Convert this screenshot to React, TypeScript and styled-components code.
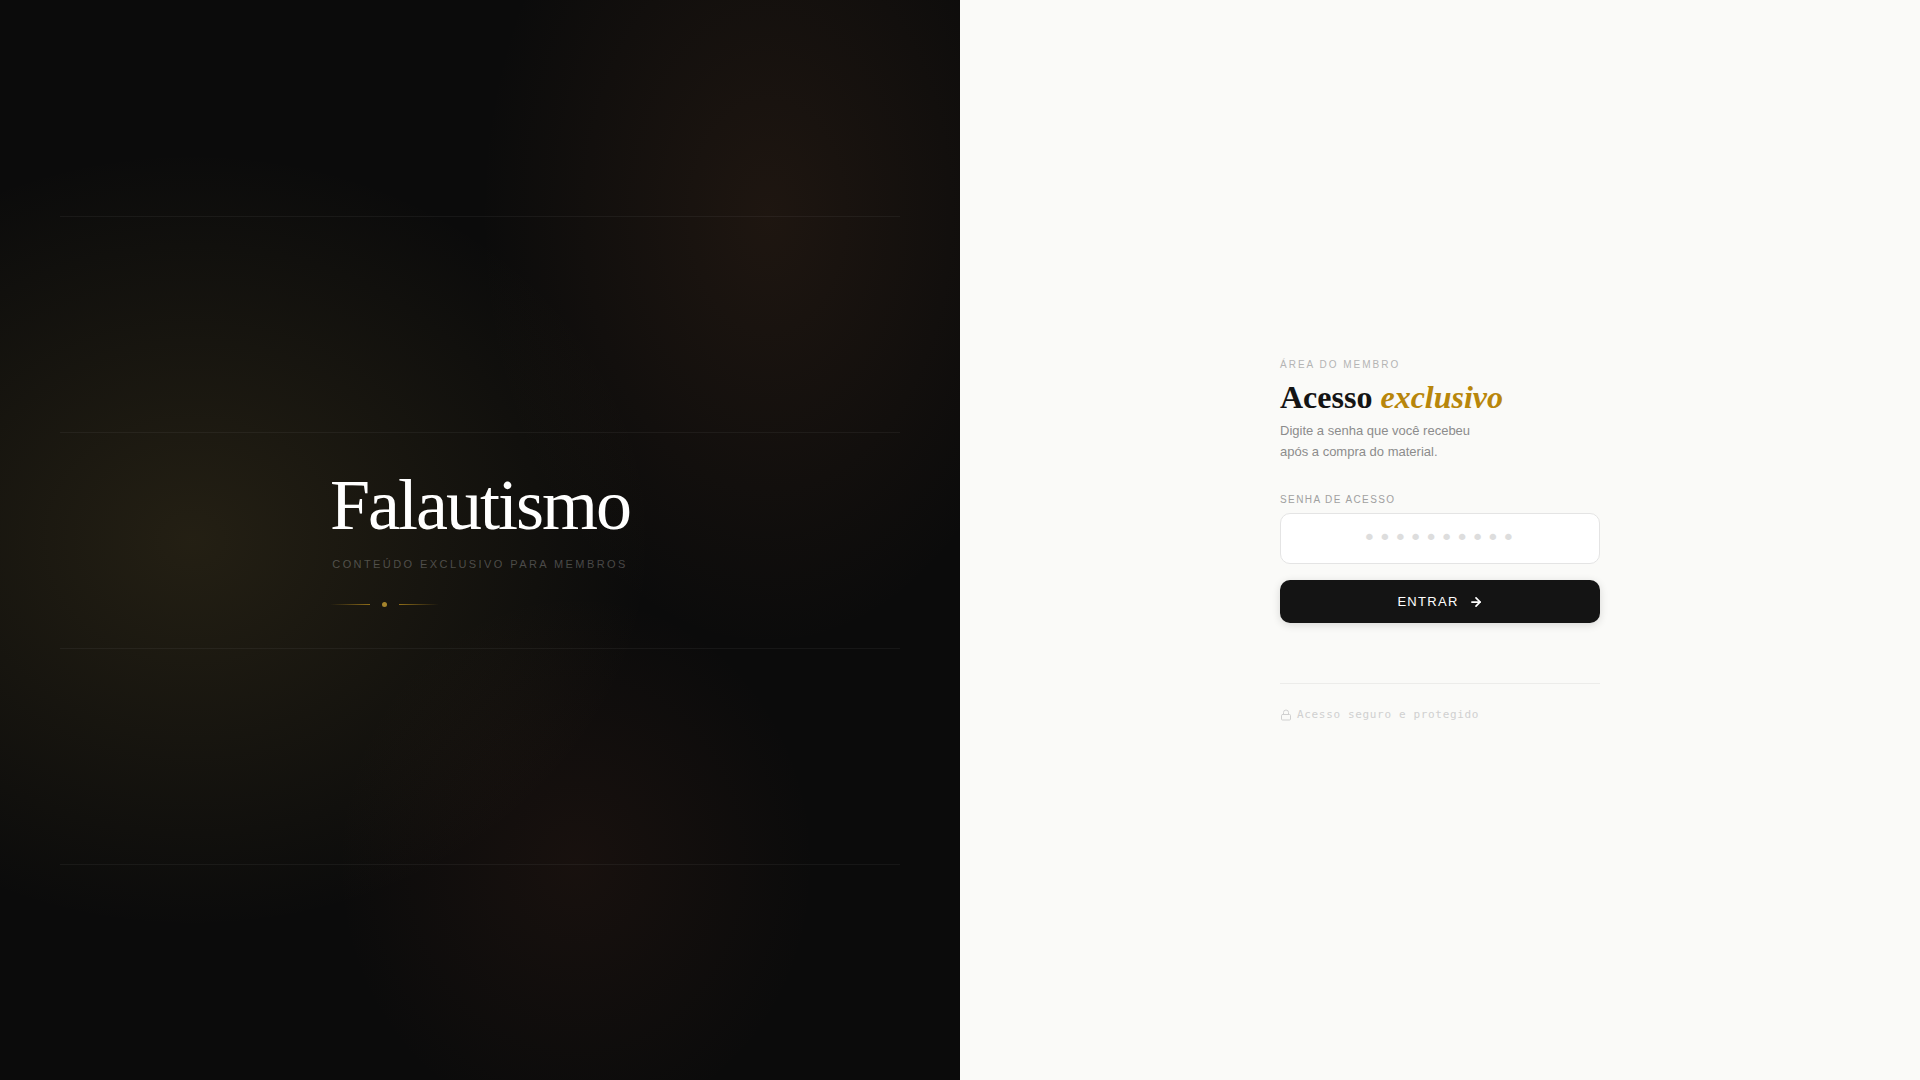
import React from "react";
import styled, { createGlobalStyle } from "styled-components";

const sans = `"Liberation Sans", Arial, sans-serif`;
const serif = `"Liberation Serif", "Times New Roman", serif`;
const mono = `"DejaVu Sans Mono", monospace`;

const GlobalStyle = createGlobalStyle`
  *, *::before, *::after { box-sizing: border-box; margin: 0; padding: 0; }
  body { background: #fafaf8; font-family: ${sans}; }
`;

const Page = styled.div`
  display: grid;
  grid-template-columns: 1fr 1fr;
  min-height: 100vh;
`;

const BrandPanel = styled.section`
  position: relative;
  display: flex;
  align-items: center;
  justify-content: center;
  overflow: hidden;
  background:
    radial-gradient(ellipse 80% 60% at 20% 50%, rgba(201, 168, 76, 0.13) 0%, transparent 60%),
    radial-gradient(ellipse 60% 80% at 80% 20%, rgba(185, 110, 60, 0.11) 0%, transparent 50%),
    radial-gradient(ellipse 50% 50% at 60% 80%, rgba(175, 85, 50, 0.08) 0%, transparent 50%),
    #0b0b0b;
`;

const Rules = styled.div`
  position: absolute;
  inset: 0 60px;
  display: grid;
  grid-template-rows: repeat(5, 1fr);
`;

const Rule = styled.span<{ $hidden?: boolean }>`
  border-top: 1px solid ${(p) => (p.$hidden ? "transparent" : "rgba(255, 255, 255, 0.05)")};
`;

const Brand = styled.div`
  position: relative;
  padding-bottom: 5px;
`;

const BrandName = styled.h2`
  font: 400 72px/72px ${serif};
  letter-spacing: -2px;
  color: #fff;
`;

const Tagline = styled.p`
  margin-top: 17px;
  font-size: 11px;
  letter-spacing: 0.22em;
  text-align: center;
  text-transform: uppercase;
  color: rgba(255, 255, 255, 0.25);
`;

const Ornament = styled.div`
  display: flex;
  align-items: center;
  gap: 12px;
  margin-top: 32px;
`;

const OrnamentLine = styled.span<{ $to: "left" | "right" }>`
  width: 40px;
  height: 1px;
  background: linear-gradient(to ${(p) => p.$to}, #8f6d18, transparent);
`;

const OrnamentDot = styled.span`
  width: 5px;
  height: 5px;
  border-radius: 50%;
  background: #a5842c;
`;

const AccessPanel = styled.main`
  display: flex;
  align-items: center;
  justify-content: center;
  padding: 40px;
  background: #fafaf8;
`;

const AccessForm = styled.form`
  width: 100%;
  max-width: 320px;
`;

const Eyebrow = styled.p`
  font-size: 10px;
  letter-spacing: 0.2em;
  text-transform: uppercase;
  color: #b4b4b4;
`;

const Heading = styled.h1`
  margin-top: 10px;
  font: 700 32px/35px ${serif};
  color: #141414;

  em { color: #b8860b; }
`;

const Intro = styled.p`
  margin-top: 5px;
  font-size: 13px;
  line-height: 21px;
  color: #8c8c8c;
`;

const Label = styled.label`
  display: block;
  margin-top: 32px;
  font-size: 10px;
  letter-spacing: 0.14em;
  text-transform: uppercase;
  color: #a0a0a0;
`;

const PasswordInput = styled.input`
  display: block;
  width: 100%;
  margin-top: 8px;
  padding: 11px 16px 13px;
  border: 1px solid #e4e4e4;
  border-radius: 10px;
  outline: none;
  background: #fff;
  font: 22px/25px ${mono};
  letter-spacing: 0.1em;
  text-align: center;
  color: #141414;

  &::placeholder { color: #ddd; }
`;

const SubmitButton = styled.button`
  display: flex;
  align-items: center;
  justify-content: center;
  gap: 10px;
  width: 100%;
  margin-top: 16px;
  padding: 14px;
  border: 0;
  border-radius: 10px;
  background: #141414;
  box-shadow: 0 2px 8px rgba(0, 0, 0, 0.14);
  font: 13px/15px ${sans};
  letter-spacing: 0.1em;
  text-transform: uppercase;
  color: #fff;
  cursor: pointer;
`;

const SafetyNote = styled.footer`
  display: flex;
  align-items: center;
  gap: 5px;
  margin-top: 60px;
  padding-top: 24px;
  border-top: 1px solid #ececea;
  font: 11px/13px ${mono};
  letter-spacing: 0.06em;
  color: #d0d0d0;
`;

const ArrowIcon = () => (
  <svg width="14" height="14" viewBox="0 0 24 24" fill="none" stroke="currentColor" strokeWidth="3" strokeLinecap="round" strokeLinejoin="round" aria-hidden="true">
    <path d="M5 12h14" />
    <path d="m12 5 7 7-7 7" />
  </svg>
);

const LockIcon = () => (
  <svg width="12" height="12" viewBox="0 0 24 24" fill="none" stroke="currentColor" strokeWidth="2" strokeLinecap="round" strokeLinejoin="round" aria-hidden="true">
    <rect x="3" y="11" width="18" height="11" rx="2" />
    <path d="M7 11V7a5 5 0 0 1 10 0v4" />
  </svg>
);

export default function App() {
  return (
    <>
      <GlobalStyle />
      <Page>
        <BrandPanel>
          <Rules aria-hidden="true">
            <Rule $hidden />
            <Rule />
            <Rule />
            <Rule />
            <Rule />
          </Rules>
          <Brand>
            <BrandName>Falautismo</BrandName>
            <Tagline>Conteúdo exclusivo para membros</Tagline>
            <Ornament aria-hidden="true">
              <OrnamentLine $to="left" />
              <OrnamentDot />
              <OrnamentLine $to="right" />
            </Ornament>
          </Brand>
        </BrandPanel>
        <AccessPanel>
          <AccessForm onSubmit={(e) => e.preventDefault()}>
            <Eyebrow>Área do membro</Eyebrow>
            <Heading>
              Acesso <em>exclusivo</em>
            </Heading>
            <Intro>
              Digite a senha que você recebeu
              <br />
              após a compra do material.
            </Intro>
            <Label htmlFor="senha">Senha de acesso</Label>
            <PasswordInput id="senha" type="password" placeholder="••••••••••" />
            <SubmitButton type="submit">
              Entrar
              <ArrowIcon />
            </SubmitButton>
            <SafetyNote>
              <LockIcon />
              Acesso seguro e protegido
            </SafetyNote>
          </AccessForm>
        </AccessPanel>
      </Page>
    </>
  );
}
